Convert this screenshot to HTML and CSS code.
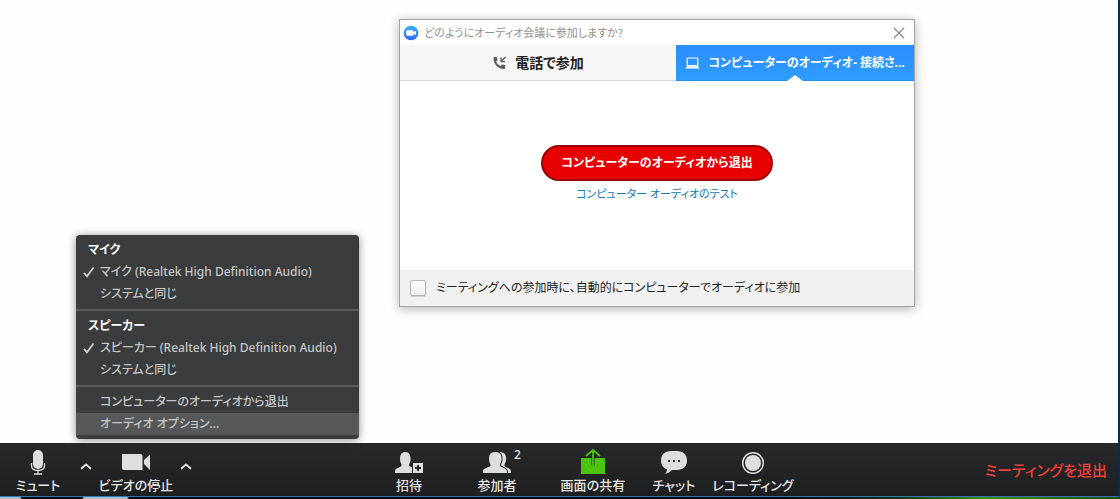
FILE: index.html
```html
<!DOCTYPE html>
<html lang="ja">
<head>
<meta charset="utf-8">
<title>ミーティング</title>
<link rel="stylesheet" href="styles.css">
</head>
<body>
<div class="window">
  <main class="stage">
    <section class="dialog" role="dialog" aria-labelledby="dialog-title">
      <header class="titlebar">
        <svg class="app-icon" viewBox="0 0 16 16" aria-hidden="true">
          <defs><linearGradient id="app-blue" x1="0" y1="0" x2="0" y2="1"><stop offset="0" stop-color="#35b3fb"/><stop offset="1" stop-color="#3461f1"/></linearGradient></defs>
          <circle cx="8" cy="8" r="7.3" fill="url(#app-blue)"/>
          <rect x="3.2" y="5.2" width="7.4" height="5.6" rx="1.3" fill="#fff"/>
          <path d="M10.6 7.3l2.4-1.6v4.6l-2.4-1.6z" fill="#fff"/>
        </svg>
        <h1 class="title" id="dialog-title">どのようにオーディオ会議に参加しますか?</h1>
        <button class="close" type="button" aria-label="閉じる">
          <svg viewBox="0 0 12 12" aria-hidden="true"><path d="M1 1l10 10M11 1L1 11" fill="none" stroke="#858585" stroke-width="1.1"/></svg>
        </button>
      </header>
      <div class="tabs" role="tablist">
        <button class="tab" type="button" role="tab" aria-selected="false">
          <svg class="tab-icon" viewBox="0 0 14 14" aria-hidden="true">
            <path d="M1 2.2c0-.7.5-1.1 1.1-1.1h1.7c.4 0 .6.2.7.6.1.7.3 1.4.5 2 .1.3 0 .6-.2.8L3.6 5.7c.9 1.9 2.4 3.4 4.4 4.3l1.2-1.3c.2-.2.5-.3.8-.2.7.2 1.4.4 2.1.5.4.1.6.4.6.7v2c0 .7-.4 1.2-1.1 1.2C5.7 12.9 1 8.3 1 2.2z" fill="#5c5b63"/>
            <path d="M13 1L9 5M8.500 1.600v4h4" fill="none" stroke="#5c5b63" stroke-width="1.3"/>
          </svg>
          <span>電話で参加</span>
        </button>
        <button class="tab tab-active" type="button" role="tab" aria-selected="true">
          <svg class="tab-icon" viewBox="0 0 15 12" aria-hidden="true">
            <rect x="2.2" y="1" width="10.6" height="7.6" rx=".8" fill="none" stroke="#fff" stroke-width="1.2"/>
            <path d="M1.700 9.200h11.600l1.200 2.300H.5z" fill="#fff"/>
          </svg>
          <span>コンピューターのオーディオ- 接続さ...</span>
        </button>
      </div>
      <div class="panel">
        <button class="leave-audio" type="button">コンピューターのオーディオから退出</button>
        <a class="test-link" href="#test">コンピューター オーディオのテスト</a>
      </div>
      <footer class="dialog-footer">
        <input class="check" type="checkbox" id="auto-join">
        <label for="auto-join">ミーティングへの参加時に、自動的にコンピューターでオーディオに参加</label>
      </footer>
    </section>

    <div class="menu" role="menu">
      <div class="menu-group">
        <h2 class="menu-heading">マイク</h2>
        <button class="menu-item checked" type="button" role="menuitemradio" aria-checked="true">
          <svg class="tick" viewBox="0 0 12 12" aria-hidden="true"><path d="M1 6.800l3 3.600L10.500 1.500" fill="none" stroke="#cfcfcf" stroke-width="1.8"/></svg>マイク (Realtek High Definition Audio)</button>
        <button class="menu-item" type="button" role="menuitemradio" aria-checked="false">システムと同じ</button>
      </div>
      <div class="menu-group">
        <h2 class="menu-heading">スピーカー</h2>
        <button class="menu-item checked" type="button" role="menuitemradio" aria-checked="true">
          <svg class="tick" viewBox="0 0 12 12" aria-hidden="true"><path d="M1 6.800l3 3.600L10.500 1.500" fill="none" stroke="#cfcfcf" stroke-width="1.8"/></svg>スピーカー (Realtek High Definition Audio)</button>
        <button class="menu-item" type="button" role="menuitemradio" aria-checked="false">システムと同じ</button>
      </div>
      <div class="menu-group">
        <button class="menu-item" type="button" role="menuitem">コンピューターのオーディオから退出</button>
        <button class="menu-item menu-hover" type="button" role="menuitem">オーディオ オプション...</button>
      </div>
    </div>
  </main>

  <nav class="toolbar">
    <div class="tools">
      <button class="tool tool-mute" type="button">
        <svg class="icon" width="20" height="28" viewBox="0 0 20 28" aria-hidden="true">
          <rect x="5" y="2" width="10" height="19" rx="5" fill="#dedede"/>
          <path d="M3.500 15v2.500c0 3 2.600 5 6.500 5s6.500-2 6.500-5V15M10 22.500v3.300M6 26h8" fill="none" stroke="#dedede" stroke-width="1.3"/>
        </svg>
        <span>ミュート</span>
      </button>
      <button class="caret" type="button" aria-label="オーディオのメニュー"><svg viewBox="0 0 12 7" aria-hidden="true"><path d="M1 5.800l5-4.300 5 4.300" fill="none" stroke="#dedede" stroke-width="1.9"/></svg></button>
      <button class="tool tool-video" type="button">
        <svg class="icon" width="30" height="28" viewBox="0 0 30 28" aria-hidden="true">
          <path d="M1 6h18.500a2 2 0 0 1 2 2v14H3a2 2 0 0 1-2-2zM29 6.500v15.500l-6-6v-4z" fill="#dedede"/>
        </svg>
        <span>ビデオの停止</span>
      </button>
      <button class="caret" type="button" aria-label="ビデオのメニュー"><svg viewBox="0 0 12 7" aria-hidden="true"><path d="M1 5.800l5-4.300 5 4.300" fill="none" stroke="#dedede" stroke-width="1.9"/></svg></button>
    </div>

    <div class="tools tools-main">
      <button class="tool tool-person" type="button">
        <svg class="icon" width="30" height="28" viewBox="0 0 30 28" aria-hidden="true">
          <path d="M1 25v-2c0-2 1.500-2.700 3.800-3.600 1.700-.7 2.800-1.100 2.800-2.400 0-1-1.200-2-1.500-4.500-.2-1.200-.1-2 .1-3.700C6.500 5.500 8.500 4 11.300 4s4.800 1.500 5.100 4.800c.2 1.700.3 2.500.1 3.700-.4 2.500-1.500 3.500-1.500 4.500 0 1 .9 1.600 3 2.200V25z" fill="#dedede"/>
          <path d="M19 15h10v10H19z" fill="#dedede"/>
          <path d="M24 17v6M21 20h6" stroke="#222426" stroke-width="2"/>
        </svg>
        <span>招待</span>
      </button>
      <button class="tool tool-people" type="button">
        <svg class="icon" width="30" height="28" viewBox="0 0 30 28" aria-hidden="true">
          <path d="M16 4c4-.5 7.600.8 8 4.800.2 1.700.2 2.500 0 3.700-.4 2.500-1.500 3.500-1.500 4.500 0 1.300.8 1.700 2.400 2.400 2.400 1.100 4.100 1.600 4.100 4.600v1H12z" fill="#dedede"/>
          <path d="M1 25v-2c0-2 1.500-2.700 4.300-3.600 2-.7 3.300-1.100 3.300-2.400 0-1-1.200-2-1.500-4.500-.2-1.200-.1-2 .1-3.700C7.500 5.500 9.500 4 13 4s6.100 1.500 6.400 4.800c.2 1.700.2 2.500 0 3.700-.3 2.500-1.500 3.500-1.500 4.500 0 1.300 1.200 1.700 2.800 2.400 2.800 1.200 4.300 1.900 4.300 4.600v1z" fill="#dedede" stroke="#222426" stroke-width="2" paint-order="stroke"/>
        </svg>
        <span class="count">2</span>
        <span>参加者</span>
      </button>
      <button class="tool tool-share" type="button">
        <svg class="icon" width="26" height="28" viewBox="0 0 26 28" aria-hidden="true">
          <path d="M1 10h10.500v7.500h3V10H25v16H1z" fill="#4ac40e"/>
          <path d="M13 18V2.500M6 8l7-6 7 6" fill="none" stroke="#4ac40e" stroke-width="1.8"/>
        </svg>
        <span>画面の共有</span>
      </button>
      <button class="tool tool-chat" type="button">
        <svg class="icon" width="28" height="28" viewBox="0 0 28 28" aria-hidden="true">
          <path d="M11 3h6c6 0 10 3.500 10 9.500s-4 9.500-10 9.500h-5c-1.600 2-4 3.300-7 3.700 1.300-1.400 2-2.700 2-4.500-4-1.300-6-4.300-6-8.700C1 6.500 5 3 11 3z" fill="#dedede"/>
          <path d="M8 12h2v2H8zM13 12h2v2h-2zM18 12h2v2h-2z" fill="#333"/>
        </svg>
        <span>チャット</span>
      </button>
      <button class="tool tool-record" type="button">
        <svg class="icon" width="24" height="28" viewBox="0 0 24 28" aria-hidden="true">
          <circle cx="12" cy="15" r="10.3" fill="none" stroke="#dedede" stroke-width="1.5"/>
          <circle cx="12" cy="15" r="8" fill="#dedede"/>
        </svg>
        <span>レコーディング</span>
      </button>
    </div>

    <button class="leave" type="button">ミーティングを退出</button>
  </nav>
</div>
<div class="desktop"></div>
</body>
</html>
```

FILE: styles.css
```css
* {
  box-sizing: border-box;
}

body {
  display: flex;
  flex-direction: column;
  min-height: 100vh;
  margin: 0;
  background: #fefefe;
  color: #222;
  font: 12px/18px "Noto Sans", "Noto Sans CJK JP", sans-serif;
  font-feature-settings: "palt";
}

button {
  padding: 0;
  border: 0;
  background: none;
  color: inherit;
  font: inherit;
  font-feature-settings: inherit;
  white-space: nowrap;
}

svg {
  display: block;
  flex: none;
}

.window {
  display: flex;
  flex: 1;
  flex-direction: column;
  border-right: 2px solid #10294c;
  border-bottom: 1px solid #2f78b4;
}

.stage {
  position: relative;
  flex: 1;
  min-height: 440px;
}

.desktop {
  height: 2px;
  background: linear-gradient(90deg, #a9bfd2 0 20px, #05070f 22px 82px, #a9bfd2 84px 127px, #05070f 129px 70%, #12300f 80%, #3f8a12 88%, #1c4a10);
}

/* Audio dialog */

.dialog {
  position: absolute;
  top: 19px;
  left: 399px;
  width: 516px;
  border: 1px solid #a3a3a3;
  background: #fff;
  box-shadow: 0 2px 10px rgba(0, 0, 0, 0.3);
}

.titlebar {
  display: flex;
  align-items: center;
  gap: 5px;
  height: 25px;
  padding: 0 9px 0 3px;
}

.app-icon {
  width: 16px;
  height: 16px;
}

.title {
  flex: 1;
  margin: 0;
  color: #929292;
  font-size: 11px;
  font-weight: 400;
}

.close svg {
  width: 12px;
  height: 12px;
}

.tabs {
  display: grid;
  grid-template-columns: 276px 1fr;
}

.tab {
  display: flex;
  align-items: center;
  justify-content: center;
  gap: 8px;
  height: 36px;
  border-bottom: 1px solid #d4d4d4;
  background: #f7f7f7;
  font-size: 14px;
  font-weight: 700;
}

.tab-icon {
  width: 15px;
  height: 14px;
}

.tab-active {
  position: relative;
  border-color: #2491f0;
  background: linear-gradient(#2d8cff, #2d9dff);
  color: #fff;
  font-size: 12px;
}

.tab-active::after {
  position: absolute;
  bottom: -1px;
  left: 50%;
  border: 8px solid transparent;
  border-top: 0;
  border-bottom: 6px solid #fff;
  margin-left: -8px;
  content: "";
}

.panel {
  display: flex;
  flex-direction: column;
  align-items: center;
  gap: 4px;
  padding: 64px 0 67px;
}

.leave-audio {
  height: 36px;
  padding: 0 18px;
  border: 2px solid #9c0505;
  border-radius: 18px;
  background: #e60000;
  color: #fff;
  font-weight: 700;
}

.test-link {
  color: #1179b5;
  font-size: 11px;
  text-decoration: none;
}

.dialog-footer {
  display: flex;
  align-items: center;
  gap: 10px;
  height: 36px;
  padding: 0 10px;
  background: #f1f1f1;
}

.check {
  width: 16px;
  height: 16px;
  margin: 0;
  border: 1px solid #b4b4b4;
  border-radius: 2px;
  appearance: none;
  background: linear-gradient(#fff, #ececec);
  box-shadow: 0 1px 1px rgba(0, 0, 0, 0.15);
}

/* Audio menu */

.menu {
  position: absolute;
  bottom: 4px;
  left: 76px;
  width: 283px;
  padding: 4px 0;
  border-radius: 4px;
  background: #3b3c3d;
  box-shadow: 0 1px 8px rgba(0, 0, 0, 0.45);
  color: #c6c6c6;
}

.menu-group + .menu-group {
  margin-top: 4px;
  padding-top: 4px;
  border-top: 2px solid #5a5b5c;
}

.menu-heading {
  margin: 0;
  padding-left: 12px;
  color: #fff;
  font-size: 12px;
  font-weight: 700;
  line-height: 22px;
}

.menu-item {
  display: flex;
  align-items: center;
  gap: 5px;
  width: 100%;
  height: 22px;
  padding-left: 24px;
  font-weight: 500;
}

.checked {
  padding-left: 7px;
}

.tick {
  width: 12px;
  height: 12px;
}

.menu-hover {
  background: #57585a;
}

/* Meeting toolbar */

.toolbar {
  display: flex;
  align-items: center;
  justify-content: space-between;
  height: 53px;
  padding: 0 11px 0 8px;
  background: linear-gradient(#27292b, #1d1f20);
  color: #e6e6e6;
  font-size: 13px;
  font-weight: 500;
}

.tools {
  display: flex;
}

.tools-main {
  margin-right: 12px;
}

.tool {
  position: relative;
  display: flex;
  flex-direction: column;
  align-items: center;
  height: 53px;
  padding-top: 5px;
}

.tool-mute {
  width: 60px;
  margin-right: 9px;
}

.tool-video {
  width: 82px;
}

.tool-person,
.tool-people {
  width: 88px;
}

.tool-share {
  width: 104px;
}

.tool-chat {
  width: 58px;
}

.tool-record {
  width: 100px;
}

.caret {
  width: 18px;
  padding-bottom: 6px;
}

.caret svg {
  width: 12px;
  height: 7px;
  margin: 0 auto;
}

.count {
  position: absolute;
  top: 4px;
  right: 20px;
  font-size: 12px;
  line-height: 16px;
}

.leave {
  color: #f0403a;
  font-size: 15px;
}
```
